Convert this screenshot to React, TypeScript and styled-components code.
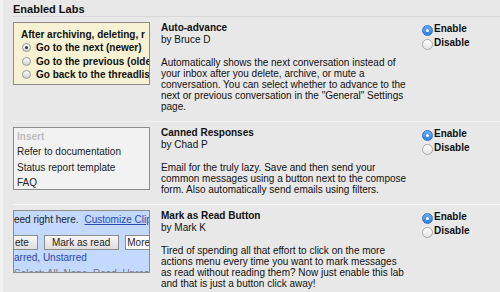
import React from "react";
import styled, { createGlobalStyle } from "styled-components";

const GlobalStyle = createGlobalStyle`
  html, body { margin: 0; padding: 0; background: #e8e8e8; }
  body { font-family: "Liberation Sans", Arial, sans-serif; color: #000; }
`;

const Page = styled.div`
  width: 500px;
  height: 292px;
  overflow: hidden;
  box-sizing: border-box;
  border-left: 3px solid #f1f1f1;
  padding-left: 10px;
  background: #e8e8e8;
`;

const Heading = styled.h2`
  margin: 0;
  box-sizing: border-box;
  height: 17px;
  padding-top: 3px;
  font-size: 11px;
  line-height: 13px;
  font-weight: bold;
  color: #111;
  border-bottom: 1px solid #d7d7d7;
`;

const LabRow = styled.div`
  display: grid;
  grid-template-columns: 137px 250px 1fr;
  column-gap: 11px;
  align-items: start;
  padding: 5px 0 9px;
  border-bottom: 1px solid #f4f4f4;
`;

const Info = styled.div`
  font-size: 10px;
  color: #111;
`;

const Title = styled.div`
  font-weight: bold;
  line-height: 12px;
`;

const Author = styled.div`
  line-height: 12px;
`;

const Description = styled.p`
  margin: 11px 0 0;
  line-height: 11px;
`;

const DescLine = styled.span`
  display: block;
  white-space: nowrap;
`;

const Choices = styled.div`
  display: flex;
  flex-direction: column;
  font-size: 10px;
  font-weight: bold;
  color: #111;
`;

const Choice = styled.label`
  display: flex;
  align-items: flex-start;
  line-height: 13px;
  gap: 1px;
`;

const MacRadio = styled.span<{ $on?: boolean }>`
  box-sizing: border-box;
  width: 11px;
  height: 11px;
  margin-top: 3px;
  border-radius: 50%;
  flex: none;
  display: flex;
  align-items: center;
  justify-content: center;
  border: 1px solid ${(p) => (p.$on ? "#2f74d0" : "#a9a9a9")};
  background: ${(p) =>
    p.$on
      ? "linear-gradient(#6aaef3, #2b7fe3)"
      : "linear-gradient(#ffffff, #e4e4e4)"};
  &::after {
    content: "";
    width: 3px;
    height: 3px;
    border-radius: 50%;
    background: #fff;
    display: ${(p) => (p.$on ? "block" : "none")};
  }
`;

/* ---------- thumbnails ---------- */

const Thumb = styled.div`
  box-sizing: border-box;
  width: 137px;
  height: 63px;
  border: 1px solid #8c8c8c;
  overflow: hidden;
  white-space: nowrap;
  font-size: 10px;
`;

const PrefThumb = styled(Thumb)`
  background: #f7f2d3;
  padding: 5px 0 0 7px;
  font-weight: bold;
  line-height: 13.3px;
  color: #111;
`;

const PrefOption = styled.div`
  display: flex;
  align-items: center;
  gap: 5px;
  padding-left: 1px;
`;

const TinyRadio = styled.span<{ $on?: boolean }>`
  box-sizing: border-box;
  width: 9px;
  height: 9px;
  border-radius: 50%;
  border: 1px solid #9a9a9a;
  background: linear-gradient(#ffffff, #cfcfcf);
  display: flex;
  align-items: center;
  justify-content: center;
  flex: none;
  &::after {
    content: "";
    width: 3px;
    height: 3px;
    border-radius: 50%;
    background: #333;
    display: ${(p) => (p.$on ? "block" : "none")};
  }
`;

const MenuThumb = styled(Thumb)`
  background: #f2f2f2;
  padding: 1px 0 0 3px;
  line-height: 15.3px;
  color: #222;
`;

const MenuItem = styled.div<{ $muted?: boolean }>`
  color: ${(p) => (p.$muted ? "#bdbdbd" : "#222")};
  font-weight: ${(p) => (p.$muted ? "bold" : "normal")};
`;

const ToolbarThumb = styled(Thumb)`
  background: #c3d9ff;
  padding-top: 2px;
  line-height: 14px;
  color: #222;
`;

const ThumbLine = styled.div<{ $tone?: "link" | "faint" }>`
  color: ${(p) =>
    p.$tone === "link" ? "#2a48ad" : p.$tone === "faint" ? "#7a7a7a" : "#222"};
  margin-top: ${(p) => (p.$tone === "faint" ? "2px" : "0")};
`;

const InlineLink = styled.span`
  color: #2a48ad;
  text-decoration: underline;
  margin-left: 6px;
`;

const ButtonRow = styled.div`
  display: flex;
  gap: 6px;
  margin: 8px 0 1px;
`;

const MiniButton = styled.span<{ $plain?: boolean; $cut?: boolean }>`
  box-sizing: border-box;
  height: 15px;
  line-height: 13px;
  flex: none;
  border: 1px solid #8d8d8d;
  border-left: ${(p) => (p.$cut ? "none" : "1px solid #8d8d8d")};
  padding: ${(p) =>
    p.$cut ? "0 8px 0 1px" : p.$plain ? "0 3px 0 1px" : "0 8px 0 7px"};
  background: ${(p) =>
    p.$plain ? "#ffffff" : "linear-gradient(#f8f8f8, #dedede)"};
  color: #222;
`;

type Lab = {
  title: string;
  author: string;
  description: string[];
  thumb: React.ReactNode;
};

const labs: Lab[] = [
  {
    title: "Auto-advance",
    author: "by Bruce D",
    description: [
      "Automatically shows the next conversation instead of",
      "your inbox after you delete, archive, or mute a",
      "conversation. You can select whether to advance to the",
      'next or previous conversation in the "General" Settings',
      "page.",
    ],
    thumb: (
      <PrefThumb>
        <div>After archiving, deleting, r</div>
        <PrefOption>
          <TinyRadio $on />
          Go to the next (newer)
        </PrefOption>
        <PrefOption>
          <TinyRadio />
          Go to the previous (older)
        </PrefOption>
        <PrefOption>
          <TinyRadio />
          Go back to the threadlist
        </PrefOption>
      </PrefThumb>
    ),
  },
  {
    title: "Canned Responses",
    author: "by Chad P",
    description: [
      "Email for the truly lazy. Save and then send your",
      "common messages using a button next to the compose",
      "form. Also automatically send emails using filters.",
    ],
    thumb: (
      <MenuThumb>
        <MenuItem $muted>Insert</MenuItem>
        <MenuItem>Refer to documentation</MenuItem>
        <MenuItem>Status report template</MenuItem>
        <MenuItem>FAQ</MenuItem>
      </MenuThumb>
    ),
  },
  {
    title: "Mark as Read Button",
    author: "by Mark K",
    description: [
      "Tired of spending all that effort to click on the more",
      "actions menu every time you want to mark messages",
      "as read without reading them? Now just enable this lab",
      "and that is just a button click away!",
    ],
    thumb: (
      <ToolbarThumb>
        <ThumbLine>
          eed right here.
          <InlineLink>Customize Clips</InlineLink>
        </ThumbLine>
        <ButtonRow>
          <MiniButton $cut>ete</MiniButton>
          <MiniButton>Mark as read</MiniButton>
          <MiniButton $plain>More actions</MiniButton>
        </ButtonRow>
        <ThumbLine $tone="link">arred, Unstarred</ThumbLine>
        <ThumbLine $tone="faint">Select: All, None, Read, Unread</ThumbLine>
      </ToolbarThumb>
    ),
  },
];

export default function App() {
  return (
    <>
      <GlobalStyle />
      <Page>
        <Heading>Enabled Labs</Heading>
        {labs.map((lab) => (
          <LabRow key={lab.title}>
            {lab.thumb}
            <Info>
              <Title>{lab.title}</Title>
              <Author>{lab.author}</Author>
              <Description>
                {lab.description.map((line) => (
                  <DescLine key={line}>{line}</DescLine>
                ))}
              </Description>
            </Info>
            <Choices>
              <Choice>
                <MacRadio $on />
                Enable
              </Choice>
              <Choice>
                <MacRadio />
                Disable
              </Choice>
            </Choices>
          </LabRow>
        ))}
      </Page>
    </>
  );
}
